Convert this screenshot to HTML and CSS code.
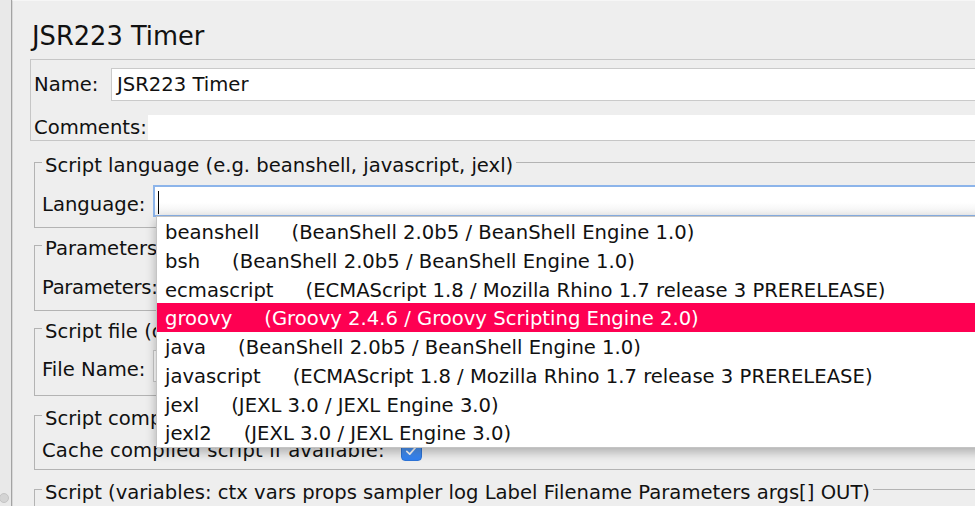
FILE: index.html
```html
<!DOCTYPE html>
<html lang="en">
<head>
<meta charset="utf-8">
<title>JSR223 Timer</title>
<link rel="stylesheet" href="styles.css">
</head>
<body>
<div class="app">
  <div class="sidebar"><span class="knob"></span></div>
  <div class="main">
    <div class="content">
      <h1 class="title">JSR223 Timer</h1>
      <div class="namepanel">
        <div class="name-row">
          <label class="lbl-name">Name:</label>
          <div class="field text">JSR223 Timer</div>
        </div>
        <div class="comments-row">
          <label class="lbl-comments">Comments:</label>
          <div class="blank"></div>
        </div>
      </div>

      <fieldset class="group g-lang">
        <legend>Script language (e.g. beanshell, javascript, jexl)</legend>
        <div class="frow">
          <label class="flabel w-lang">Language:</label>
          <div class="combo">
            <div class="field focus"><span class="caret"></span></div>
            <ul class="popup">
              <li class="opt"><span>beanshell</span><span class="desc">(BeanShell 2.0b5 / BeanShell Engine 1.0)</span></li>
              <li class="opt"><span>bsh</span><span class="desc">(BeanShell 2.0b5 / BeanShell Engine 1.0)</span></li>
              <li class="opt"><span>ecmascript</span><span class="desc">(ECMAScript 1.8 / Mozilla Rhino 1.7 release 3 PRERELEASE)</span></li>
              <li class="opt sel"><span>groovy</span><span class="desc">(Groovy 2.4.6 / Groovy Scripting Engine 2.0)</span></li>
              <li class="opt"><span>java</span><span class="desc">(BeanShell 2.0b5 / BeanShell Engine 1.0)</span></li>
              <li class="opt"><span>javascript</span><span class="desc">(ECMAScript 1.8 / Mozilla Rhino 1.7 release 3 PRERELEASE)</span></li>
              <li class="opt"><span>jexl</span><span class="desc">(JEXL 3.0 / JEXL Engine 3.0)</span></li>
              <li class="opt"><span>jexl2</span><span class="desc">(JEXL 3.0 / JEXL Engine 3.0)</span></li>
            </ul>
          </div>
        </div>
      </fieldset>

      <fieldset class="group g-params">
        <legend>Parameters</legend>
        <div class="frow">
          <label class="flabel w-params">Parameters:</label>
          <div class="field text"></div>
        </div>
      </fieldset>

      <fieldset class="group g-file">
        <legend>Script file (overrides script)</legend>
        <div class="frow">
          <label class="flabel w-file">File Name:</label>
          <div class="field text"></div>
        </div>
      </fieldset>

      <fieldset class="group g-cache">
        <legend>Script compilation caching</legend>
        <div class="crow">
          <label class="flabel">Cache compiled script if available:</label>
          <span class="checkbox">
            <svg viewBox="0 0 20 20" width="14" height="14"><path d="M4 10.5 L8.2 14.5 L16 5.5" fill="none" stroke="#fff" stroke-width="2.4" stroke-linecap="round" stroke-linejoin="round"/></svg>
          </span>
        </div>
      </fieldset>

      <fieldset class="group g-script">
        <legend>Script (variables: ctx vars props sampler log Label Filename Parameters args[] OUT)</legend>
        <div class="script-area"></div>
      </fieldset>
    </div>
  </div>
</div>
</body>
</html>
```

FILE: styles.css
```css
* {
  box-sizing: border-box;
}

html, body {
  margin: 0;
  padding: 0;
}

body {
  font-family: "DejaVu Sans", "Lucida Grande", sans-serif;
  font-size: 19.6px;
  color: #111;
  background: #eeeeee;
  overflow: hidden;
}

.app {
  display: flex;
  width: 975px;
  height: 506px;
  overflow: hidden;
}

.sidebar {
  width: 12px;
  flex: none;
  background: #e9e9e9;
  border-right: 1px solid #a3a3a3;
  display: flex;
  flex-direction: column;
  justify-content: flex-end;
  padding-bottom: 3px;
}

.knob {
  width: 10px;
  height: 10px;
  border-radius: 50%;
  background: #d4d4d4;
  border: 1px solid #c4c4c4;
  margin-left: -1px;
}

.main {
  flex: 1;
  overflow: hidden;
  border-left: 1px solid #d8d8d8;
  border-top: 1px solid #f6f6f6;
  background: #eeeeee;
}

.content {
  width: 1100px;
  padding-left: 17px;
}

.title {
  margin: 20px 0 8px;
  padding-left: 2px;
  font-size: 25.7px;
  line-height: 30px;
  font-weight: normal;
  color: #111;
}

/* Name / comments panel */
.namepanel {
  border: 1px solid #c6c6c6;
  padding-top: 8px;
}

.name-row {
  display: flex;
  align-items: center;
  height: 33px;
  padding-left: 3px;
}

.lbl-name {
  width: 77px;
  flex: none;
}

.field {
  flex: 1;
  background: #fff;
  border: 1px solid #cacaca;
}

.field.text {
  height: 33px;
  line-height: 31px;
  padding-left: 5px;
  white-space: nowrap;
}

.comments-row {
  display: flex;
  height: 25px;
  margin-top: 14px;
  padding-left: 3px;
  line-height: 25px;
}

.lbl-comments {
  width: 114px;
  flex: none;
}

.blank {
  flex: 1;
  background: #fff;
}

/* Titled groups */
.group {
  border: 1px solid #b3b3b3;
  margin: 0 0 0 4px;
  padding: 11px 0 10px 7px;
  min-width: 0;
}

.group legend {
  padding: 7px 3px 0;
  line-height: 16px;
  white-space: nowrap;
}

.g-lang {
  margin-top: 10px;
}

.g-params {
  margin-top: 6px;
}

.g-file {
  margin-top: 6px;
  padding-top: 10px;
  padding-bottom: 13px;
}

.g-cache {
  margin-top: 8px;
  padding-top: 7px;
  padding-bottom: 7px;
}

.g-script {
  margin-top: 8px;
}

.frow {
  display: flex;
  align-items: center;
  height: 32px;
}

.frow .field.text {
  height: 32px;
}

.flabel {
  padding-top: 6px;
  flex: none;
  white-space: nowrap;
}

.w-lang {
  width: 111px;
}

.w-params {
  width: 124px;
  letter-spacing: -0.3px;
}

.w-file {
  width: 111px;
}

/* Combo box with open list */
.combo {
  position: relative;
  flex: 1;
  height: 32px;
}

.field.focus {
  height: 32px;
  border: 2px solid #8cb4ea;
  background: linear-gradient(#ffffff 55%, #f0f0f0);
  display: flex;
  align-items: center;
  padding-left: 3px;
}

.caret {
  width: 1px;
  height: 23px;
  background: #000;
  margin-top: 2px;
}

.popup {
  position: absolute;
  left: 3px;
  top: 31px;
  width: 900px;
  margin: 0;
  padding: 0;
  list-style: none;
  background: #fff;
  border: 1px solid #c4c4c4;
  box-shadow: 0 4px 10px rgba(0, 0, 0, 0.28);
  z-index: 10;
}

.opt {
  height: 28.75px;
  line-height: 24.75px;
  padding-top: 4px;
  padding-left: 8px;
  white-space: nowrap;
  color: #111;
}

.opt .desc {
  margin-left: 32px;
}

.opt.sel {
  background: #fe0052;
  color: #fff;
}

/* Checkbox row */
.crow {
  display: flex;
  align-items: center;
  height: 28px;
}

.crow .flabel {
  padding-top: 4px;
  letter-spacing: 0.15px;
}

.checkbox {
  width: 21px;
  height: 20px;
  margin-left: 16px;
  margin-top: 6px;
  border-radius: 4px;
  background: linear-gradient(#5fa3f7, #2f7ff0);
  border: 1px solid #2d74d8;
  display: flex;
  align-items: center;
  justify-content: center;
}

.script-area {
  height: 60px;
}
```
